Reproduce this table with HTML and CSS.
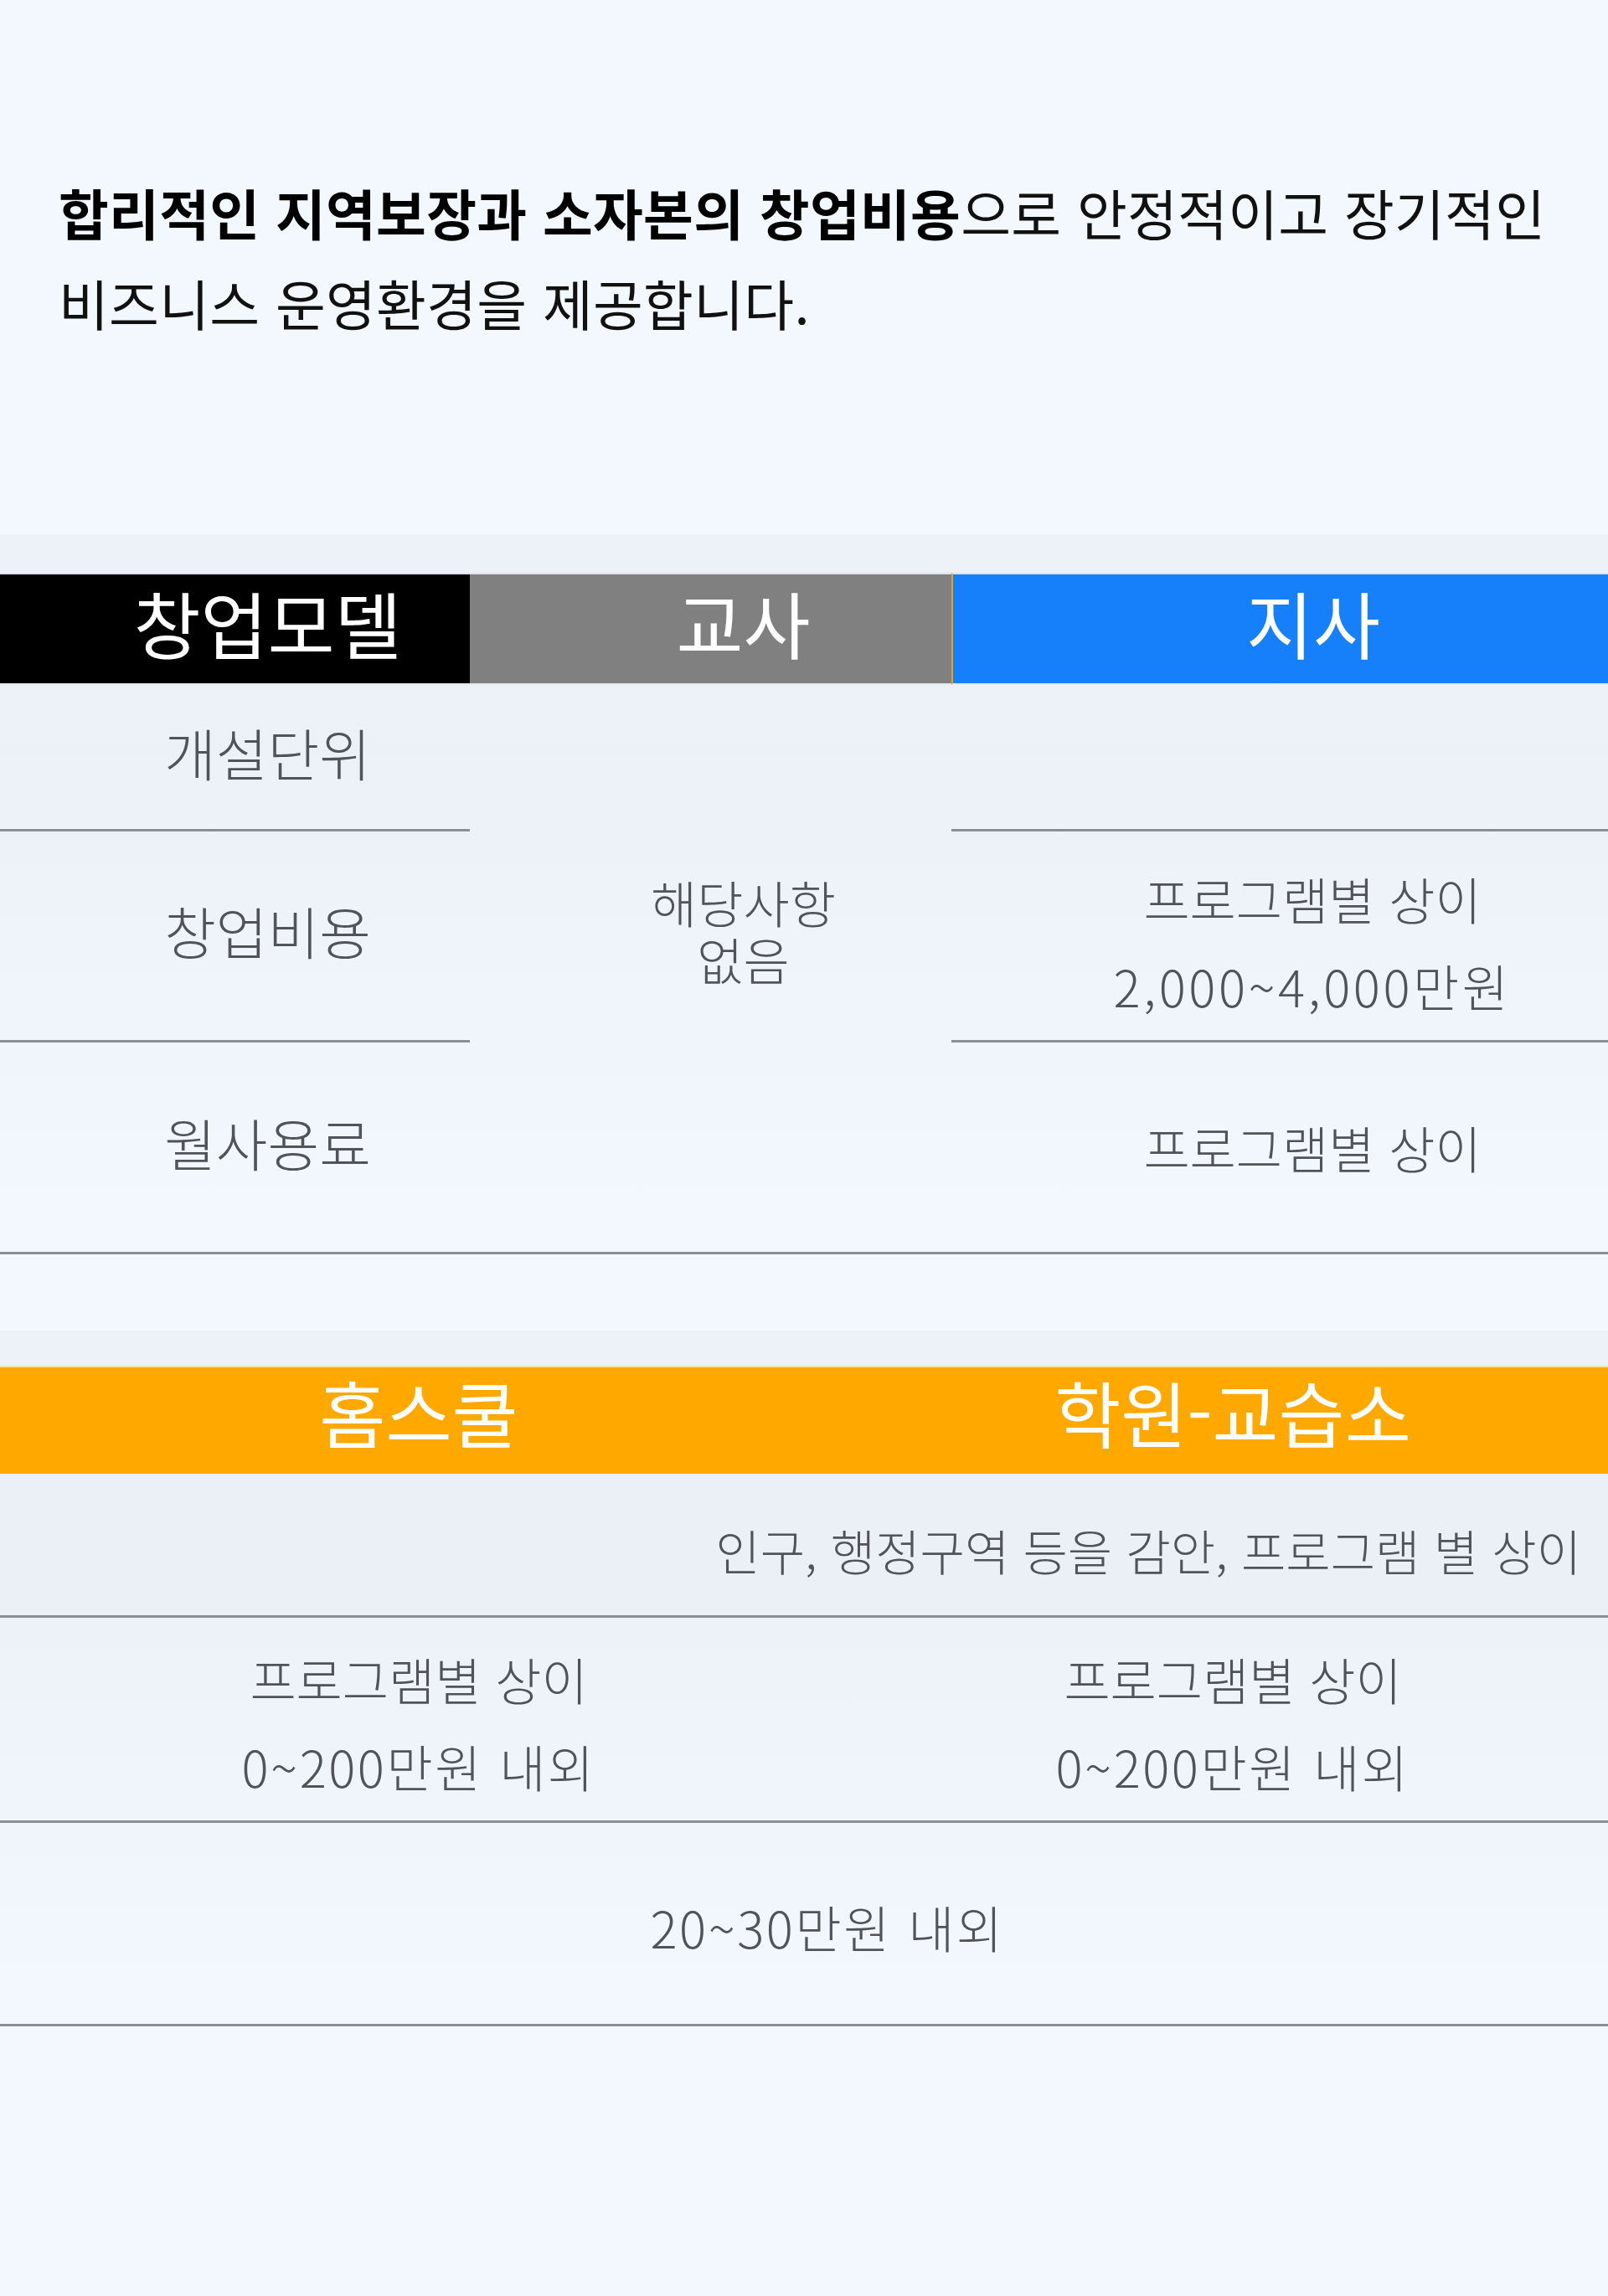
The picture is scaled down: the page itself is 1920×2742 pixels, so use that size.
FILE: index.html
```html
<!DOCTYPE html>
<html lang="ko">
<head>
<meta charset="utf-8">
<title>창업모델</title>
<link rel="stylesheet" href="styles.css">
</head>
<body>
<div class="page">
  <div class="intro">
    <p><strong>합리적인 지역보장과 소자본의 창업비용</strong>으로 안정적이고 장기적인<br>비즈니스 운영환경을 제공합니다.</p>
  </div>

  <section class="band band-a">
    <div class="grid-a">
      <div class="hd hd-black">창업모델</div>
      <div class="hd hd-grey">교사</div>
      <div class="hd hd-blue">지사</div>

      <div class="cell c1 r1 line">개설단위</div>
      <div class="cell c2 merged"><div class="txt"><div class="ln">해당사항</div><div class="ln">없음</div></div></div>
      <div class="cell c3 r1 line"></div>

      <div class="cell c1 r2 line">창업비용</div>
      <div class="cell c3 r2 line val"><div class="txt">프로그램별 상이<br><span class="num wide">2,000~4,000만원</span></div></div>

      <div class="cell c1 r3">월사용료</div>
      <div class="cell c3 r3 val">프로그램별 상이</div>
    </div>
  </section>

  <section class="band band-b">
    <div class="grid-b">
      <div class="hd hd-orange b1">홈스쿨</div>
      <div class="hd hd-orange b2">학원-교습소</div>

      <div class="cell rowa">인구, 행정구역 등을 감안, 프로그램 별 상이</div>

      <div class="cell b1 rowb val"><div class="txt">프로그램별 상이<br><span class="num">0~200만원 내외</span></div></div>
      <div class="cell b2 rowb val"><div class="txt">프로그램별 상이<br><span class="num">0~200만원 내외</span></div></div>

      <div class="cell rowc"><div class="txt num">20~30만원 내외</div></div>
    </div>
  </section>
</div>
</body>
</html>
```

FILE: styles.css
```css
html, body {
  margin: 0;
  padding: 0;
}

body {
  background: #f3f7fe;
  font-family: "Noto Sans CJK KR", "Noto Sans", sans-serif;
  color: #505459;
}

.page {
  width: 1920px;
  height: 2742px;
  overflow: hidden;
}

.intro {
  padding: 199px 0 0 70px;
}

.intro p {
  margin: 0;
  font-size: 65px;
  line-height: 108px;
  font-weight: 400;
  color: #111;
  letter-spacing: 0.3px;
  white-space: nowrap;
}

.intro strong {
  font-weight: 700;
  color: #000;
}

.band {
  background: linear-gradient(to bottom, #edf1f8 0%, #ecf0f7 30%, #f3f7fe 100%);
}

.band-a {
  margin-top: 223px;
  padding-top: 46px;
}

.band-b {
  margin-top: 91px;
  padding-top: 42px;
}

.grid-a {
  display: grid;
  grid-template-columns: 561px 575px 1fr;
  grid-template-rows: 134px 175px 252px 250px;
  border-bottom: 3px solid #8b8f95;
}

.grid-b {
  display: grid;
  grid-template-columns: 960px 960px;
  grid-template-rows: 129px 172px 245px 240px;
  border-bottom: 3px solid #8b8f95;
}

.hd {
  box-sizing: border-box;
  display: flex;
  align-items: center;
  justify-content: center;
  color: #fff;
  font-size: 87px;
  font-weight: 400;
  border-top: 2px solid #dfe3e8;
  border-bottom: 2px solid #e6eaf0;
  padding-left: 78px;
  padding-bottom: 16px;
}

.hd-black { background: #000; }
.hd-grey { background: #808080; }
.hd-blue { background: #1580fa; border-left: 2px solid #f0a010; }

.hd-orange {
  background: #ffa800;
  border-top: 2px solid #f6e0a8;
  border-bottom: none;
  font-size: 86px;
  padding-bottom: 22px;
}

.cell {
  box-sizing: border-box;
  display: flex;
  align-items: center;
  justify-content: center;
  text-align: center;
  font-size: 60px;
  font-weight: 300;
  color: #505459;
  white-space: nowrap;
}

.txt {
  text-align: center;
}

.num {
  letter-spacing: 2.5px;
}

.num.wide {
  letter-spacing: 3.5px;
}

.grid-a .cell {
  padding-left: 78px;
}

.c1 { grid-column: 1; font-size: 67px; padding-bottom: 14px; }
.c2 { grid-column: 2; }
.c3 { grid-column: 3; }
.r1 { grid-row: 2; }
.r2 { grid-row: 3; }
.r3 { grid-row: 4; }

.c3.r2 { padding-top: 14px; }

.line {
  border-bottom: 3px solid #8b8f95;
}

.merged {
  grid-row: 2 / 5;
  align-items: flex-start;
  padding-top: 225px;
  font-size: 60px;
  line-height: 68px;
}

.merged .ln {
  height: 68px;
  line-height: 68px;
}

.val {
  line-height: 104px;
}

.b1 { grid-column: 1; padding-left: 40px; }
.b2 { grid-column: 2; padding-left: 64px; }

.rowa {
  grid-column: 1 / 3;
  grid-row: 2;
  justify-content: flex-end;
  padding: 12px 32px 0 0;
  background: #ebf0f7;
  border-bottom: 3px solid #8b8f95;
  font-size: 58px;
}

.rowb {
  grid-row: 3;
  border-bottom: 3px solid #8b8f95;
  padding-top: 8px;
}

.rowc {
  grid-column: 1 / 3;
  grid-row: 4;
  padding: 6px 0 0 56px;
}
```
